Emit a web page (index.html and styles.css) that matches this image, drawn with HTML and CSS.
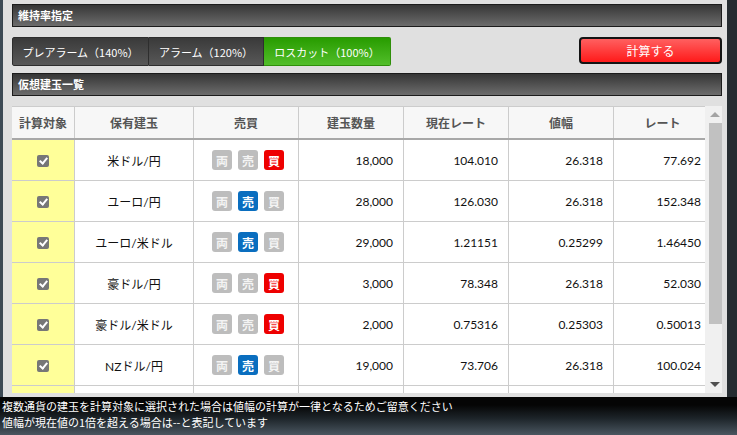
FILE: index.html
```html
<!DOCTYPE html>
<html lang="ja">
<head>
    <meta charset="UTF-8">
    <title>ロスカットシミュレーション</title>
    <link rel="stylesheet" href="styles.css">
</head>
<body>
    <div class="screen">
        <div class="panel">
            <div class="bar-title">維持率指定</div>
            <div class="control-row">
                <div class="tabs">
                    <div class="tab">プレアラーム（140%）</div>
                    <div class="tab">アラーム（120%）</div>
                    <div class="tab active">ロスカット（100%）</div>
                </div>
                <button class="calc-button">計算する</button>
            </div>
            <div class="bar-title">仮想建玉一覧</div>
            <div class="table-box">
                <div class="table-clip">
                    <table class="positions">
                        <thead>
                            <tr>
                                <th class="c-check">計算対象</th>
                                <th class="c-pair">保有建玉</th>
                                <th class="c-side">売買</th>
                                <th class="c-num">建玉数量</th>
                                <th class="c-num">現在レート</th>
                                <th class="c-num">値幅</th>
                                <th class="c-last">レート</th>
                            </tr>
                        </thead>
                        <tbody>
                            <tr>
                                <td class="check-cell"><span class="check"></span></td>
                                <td class="pair">米ドル/円</td>
                                <td class="side"><span class="sb">両</span><span class="sb">売</span><span class="sb buy">買</span></td>
                                <td class="num">18,000</td>
                                <td class="num">104.010</td>
                                <td class="num">26.318</td>
                                <td class="num">77.692</td>
                            </tr>
                            <tr>
                                <td class="check-cell"><span class="check"></span></td>
                                <td class="pair">ユーロ/円</td>
                                <td class="side"><span class="sb">両</span><span class="sb sell">売</span><span class="sb">買</span></td>
                                <td class="num">28,000</td>
                                <td class="num">126.030</td>
                                <td class="num">26.318</td>
                                <td class="num">152.348</td>
                            </tr>
                            <tr>
                                <td class="check-cell"><span class="check"></span></td>
                                <td class="pair">ユーロ/米ドル</td>
                                <td class="side"><span class="sb">両</span><span class="sb sell">売</span><span class="sb">買</span></td>
                                <td class="num">29,000</td>
                                <td class="num">1.21151</td>
                                <td class="num">0.25299</td>
                                <td class="num">1.46450</td>
                            </tr>
                            <tr>
                                <td class="check-cell"><span class="check"></span></td>
                                <td class="pair">豪ドル/円</td>
                                <td class="side"><span class="sb">両</span><span class="sb">売</span><span class="sb buy">買</span></td>
                                <td class="num">3,000</td>
                                <td class="num">78.348</td>
                                <td class="num">26.318</td>
                                <td class="num">52.030</td>
                            </tr>
                            <tr>
                                <td class="check-cell"><span class="check"></span></td>
                                <td class="pair">豪ドル/米ドル</td>
                                <td class="side"><span class="sb">両</span><span class="sb">売</span><span class="sb buy">買</span></td>
                                <td class="num">2,000</td>
                                <td class="num">0.75316</td>
                                <td class="num">0.25303</td>
                                <td class="num">0.50013</td>
                            </tr>
                            <tr>
                                <td class="check-cell"><span class="check"></span></td>
                                <td class="pair">NZドル/円</td>
                                <td class="side"><span class="sb">両</span><span class="sb sell">売</span><span class="sb">買</span></td>
                                <td class="num">19,000</td>
                                <td class="num">73.706</td>
                                <td class="num">26.318</td>
                                <td class="num">100.024</td>
                            </tr>
                            <tr>
                                <td class="check-cell"></td>
                                <td class="pair"></td>
                                <td class="side"></td>
                                <td class="num"></td>
                                <td class="num"></td>
                                <td class="num"></td>
                                <td class="num"></td>
                            </tr>
                        </tbody>
                    </table>
                </div>
                <div class="scrollbar">
                    <span class="arrow up"></span>
                    <div class="thumb"></div>
                    <span class="arrow down"></span>
                </div>
            </div>
        </div>
        <div class="notes">
            <p>複数通貨の建玉を計算対象に選択された場合は値幅の計算が一律となるためご留意ください</p>
            <p>値幅が現在値の1倍を超える場合は--と表記しています</p>
        </div>
    </div>
</body>
</html>
```

FILE: styles.css
```css
body {
    margin: 0;
    background-color: #000;
    font-family: Lato, "Noto Sans CJK JP", sans-serif;
    font-size: 12px;
}
.screen {
    width: 737px;
    height: 435px;
    overflow: hidden;
    background: linear-gradient(to bottom, #050505 0px, #050505 405px, #1c2328 418px, #4a5660 435px);
}
.panel {
    width: 710px;
    height: 393px;
    padding: 4px 5px 0 9px;
    border-left: 3px solid #3d4a55;
    border-right: 10px solid #262c31;
    background-color: #e0e0e0;
    display: flex;
    flex-direction: column;
}
.bar-title {
    height: 21px;
    line-height: 21px;
    padding-left: 5px;
    border: 1px solid #1c1c1c;
    background: linear-gradient(to bottom, #363636, #6c6c6c);
    color: #fff;
    font-weight: bold;
    font-size: 11px;
    flex-shrink: 0;
}
.control-row {
    display: flex;
    justify-content: space-between;
    align-items: flex-start;
    margin: 10px 0 7px;
    height: 29px;
    flex-shrink: 0;
}
.tabs {
    display: flex;
    height: 29px;
}
.tab {
    box-sizing: border-box;
    display: flex;
    align-items: center;
    justify-content: center;
    white-space: nowrap;
    height: 29px;
    border: 1px solid #2e2e2e;
    border-left: none;
    background: linear-gradient(to bottom, #3a3a3a, #585858);
    color: #fff;
    font-family: "Noto Sans CJK JP", sans-serif;
    font-size: 11px;
}
.tab:first-child {
    border-left: 1px solid #2e2e2e;
    border-radius: 2px 0 0 2px;
    width: 137px;
}
.tab:nth-child(2) {
    width: 115px;
}
.tab.active {
    width: 127px;
    border-color: #2f8f0a;
    border-radius: 0 2px 2px 0;
    background: linear-gradient(to bottom, #289c00, #52be2a);
}
.calc-button {
    width: 143px;
    height: 27px;
    border: 2px solid #141414;
    border-radius: 4px;
    background: linear-gradient(to bottom, #ff6060, #ff1a1a);
    color: #fff;
    font-family: "Noto Sans CJK JP", sans-serif;
    font-size: 12px;
    padding: 0;
}
.table-box {
    display: flex;
    margin-top: 10px;
    height: 287px;
    background-color: #fff;
    flex-shrink: 0;
}
.table-clip {
    width: 693px;
    height: 287px;
    overflow: hidden;
}
.positions {
    width: 693px;
    border-collapse: collapse;
    table-layout: fixed;
}
.positions th {
    height: 31px;
    padding: 0;
    background-color: #f7f7f7;
    color: #555;
    font-weight: bold;
    font-size: 12px;
    border: 1px solid #ccc;
    border-bottom: 2px solid #a8a8a8;
}
.c-check { width: 62px; }
.c-pair { width: 118px; }
.c-side { width: 104px; }
.c-num { width: 104px; }
.c-last { width: 97px; }
.positions td {
    height: 40px;
    padding: 0;
    border: 1px solid #ccc;
    color: #111;
    font-size: 12px;
}
.positions tr > :first-child {
    border-left: none;
}
.check-cell {
    background-color: #ffff99;
    text-align: center;
}
.check {
    display: inline-block;
    width: 12px;
    height: 12px;
    border-radius: 2px;
    background-color: #777;
    position: relative;
    vertical-align: middle;
}
.check::after {
    content: "";
    position: absolute;
    left: 4px;
    top: 1px;
    width: 3px;
    height: 6px;
    border: solid #fff;
    border-width: 0 2px 2px 0;
    transform: rotate(40deg);
}
.pair {
    text-align: center;
}
.side {
    text-align: center;
    padding-left: 4px !important;
}
.sb {
    display: inline-flex;
    align-items: center;
    justify-content: center;
    width: 20px;
    height: 20px;
    margin: 0 3px;
    border-radius: 3px;
    background-color: #bdbdbd;
    color: #f4f4f4;
    font-family: "Noto Sans CJK JP", sans-serif;
    font-weight: bold;
    font-size: 12px;
    vertical-align: middle;
}
.sb.buy {
    background-color: #ee0000;
    color: #fff;
}
.sb.sell {
    background-color: #0a6ebf;
    color: #fff;
}
.num {
    text-align: right;
    padding-right: 10px !important;
}
.scrollbar {
    width: 17px;
    background-color: #f0f0f0;
    display: flex;
    flex-direction: column;
    align-items: center;
}
.thumb {
    width: 13px;
    height: 201px;
    margin-left: 4px;
    background-color: #c1c1c1;
}
.arrow {
    width: 0;
    height: 0;
    border-left: 5px solid transparent;
    border-right: 5px solid transparent;
    margin-left: 2px;
}
.arrow.up {
    border-bottom: 5px solid #a3a3a3;
    margin-top: 6px;
    margin-bottom: 6px;
}
.arrow.down {
    border-top: 5px solid #505050;
    margin-top: auto;
    margin-bottom: 6px;
}
.notes {
    padding: 1px 2px 0;
    color: #fff;
    font-family: "Noto Sans CJK JP", sans-serif;
    font-size: 11px;
    line-height: 16px;
}
.notes p {
    margin: 0;
}
```
